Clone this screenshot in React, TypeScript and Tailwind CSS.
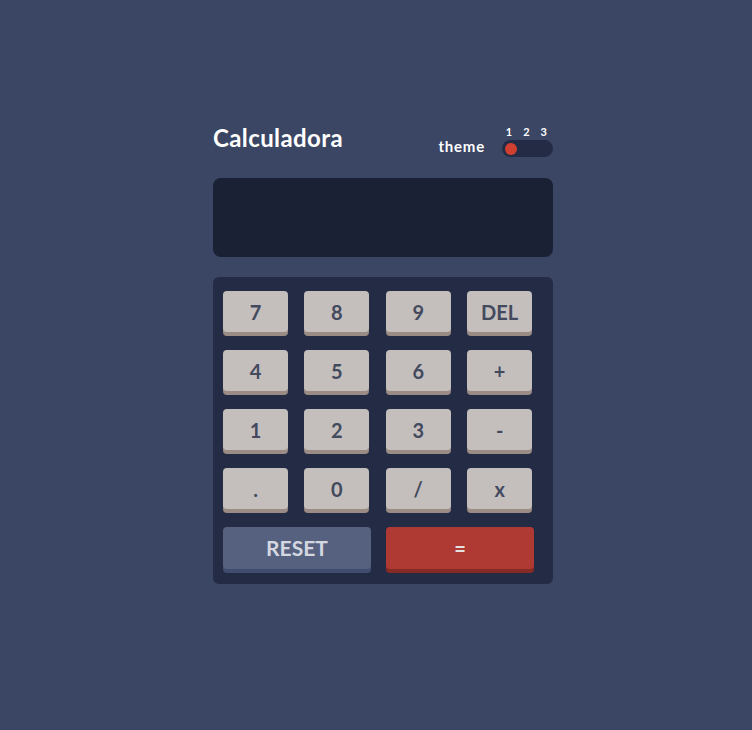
import React from "react"

const rows = [
    ["7", "8", "9", "DEL"],
    ["4", "5", "6", "+"],
    ["1", "2", "3", "-"],
    [".", "0", "/", "x"],
]

function Key({ label }: { label: string }) {
    return (
        <button className="w-[65px] h-[41px] rounded-[4px] bg-[#c4bfbd] shadow-[0_4px_0_#9a8c85] text-[#434a5d] text-[20px] font-bold flex items-center justify-center">
            {label}
        </button>
    )
}

export default function App() {
    return (
        <div className="min-h-screen w-full bg-[#3a4663] pt-[124px]" style={{ fontFamily: "Lato, 'Open Sans', sans-serif" }}>
            <div className="w-[340px] ml-[213px]">
                <header className="flex justify-between items-end h-[33px]">
                    <h1 className="text-white text-[24px] font-bold leading-none mb-[7px] tracking-[0.4px]">Calculadora</h1>
                    <div className="flex items-end gap-[17px]">
                        <span className="text-white text-[15px] font-bold leading-none mb-[3px] tracking-[0.8px]">theme</span>
                        <div className="flex flex-col items-end">
                            <div className="flex gap-[11px] pr-[6px] text-white text-[11px] font-bold leading-none mb-[3px]">
                                <span>1</span>
                                <span>2</span>
                                <span>3</span>
                            </div>
                            <div className="w-[51px] h-[17px] rounded-full bg-[#232b45] flex items-center px-[3px]">
                                <div className="w-[12px] h-[12px] rounded-full bg-[#d03f2f]" />
                            </div>
                        </div>
                    </div>
                </header>

                <div className="mt-[21px] h-[79px] rounded-[8px] bg-[#1a2135]" />

                <div className="mt-[20px] rounded-[6px] bg-[#232b45] pt-[14px] pb-[15px] pl-[10px]">
                    <div className="flex flex-col gap-[18px]">
                        {rows.map((row, i) => (
                            <div key={i} className="flex gap-[16.4px]">
                                {row.map((k) => (
                                    <Key key={k} label={k} />
                                ))}
                            </div>
                        ))}
                        <div className="flex gap-[15px]">
                            <button className="w-[148px] h-[42px] rounded-[4px] bg-[#56617f] shadow-[0_4px_0_#414d6e] text-[#d4d7e0] text-[21px] font-bold">
                                RESET
                            </button>
                            <button className="w-[148px] h-[42px] rounded-[4px] bg-[#af3a34] shadow-[0_4px_0_#862a25] text-[#e6e1e1] text-[20px] font-bold">
                                =
                            </button>
                        </div>
                    </div>
                </div>
            </div>
        </div>
    )
}
